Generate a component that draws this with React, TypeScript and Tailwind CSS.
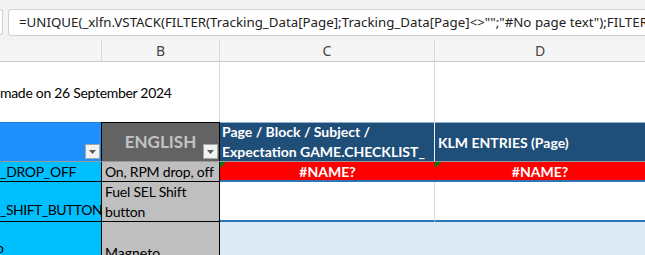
const cal = { fontFamily: "Lato, 'Liberation Sans', sans-serif" };
const seg = { fontFamily: "'Noto Sans', 'Open Sans', sans-serif" };

const FilterButton = () => (
  <div className="flex h-[15px] w-[15px] items-center justify-center border border-[#a6a6a6] bg-[#f2f2f2]">
    <svg width="7" height="4" viewBox="0 0 7 4">
      <path d="M0 0h7L3.5 4z" fill="#595959" />
    </svg>
  </div>
);

const ErrorMark = () => (
  <svg className="absolute left-0 top-0" width="6" height="6" viewBox="0 0 6 6">
    <path d="M0 0h6L0 6z" fill="#008000" />
  </svg>
);

export default function App() {
  return (
    <div className="h-[255px] w-[645px] overflow-hidden bg-white text-black" style={cal}>
      {/* formula bar */}
      <div className="flex h-[40px] items-start gap-[5px] bg-[#f3f3f3] pt-[9px]">
        <div className="h-[26px] w-[3px] rounded-r-[4px] border border-l-0 border-[#d0d0d0] bg-white"></div>
        <div
          className="flex h-[27px] flex-1 items-center overflow-hidden whitespace-nowrap rounded-l-[4px] border border-r-0 border-[#d0d0d0] bg-white pl-[10px] text-[13.3px] text-[#222]"
          style={seg}
        >
          =UNIQUE(_xlfn.VSTACK(FILTER(Tracking_Data[Page];Tracking_Data[Page]&lt;&gt;"";"#No page text");FILTER(
        </div>
      </div>

      {/* column letters */}
      <div className="flex h-[22px] border-b border-[#c8c8c8] bg-[#f5f5f5] text-[14px] text-[#444]" style={seg}>
        <div className="w-[102px] shrink-0 border-r border-[#dadada]"></div>
        <div className="flex w-[118px] shrink-0 items-center justify-center border-r border-[#dadada]">B</div>
        <div className="flex w-[215px] shrink-0 items-center justify-center border-r border-[#dadada]">C</div>
        <div className="flex flex-1 items-center justify-center">D</div>
      </div>

      {/* title row */}
      <div className="flex h-[60px] text-[14px] tracking-[-0.3px]">
        <div className="w-[220px] shrink-0 whitespace-nowrap border-r border-[#dadada] pt-[20px]">made on 26 September 2024</div>
        <div className="w-[215px] shrink-0 border-r border-[#dadada]"></div>
        <div className="flex-1"></div>
      </div>

      {/* table header */}
      <div className="flex h-[40px] border-b border-[#9a9a9a]">
        <div className="flex w-[101px] shrink-0 items-end justify-end border-t border-[#1b7fe0] bg-[#1f8ffb] pb-[2px] pr-[1px]">
          <FilterButton />
        </div>
        <div className="relative flex w-[119px] shrink-0 items-center justify-center border border-b-0 border-black bg-[#636363] text-[17px] font-bold text-[#c4c4c4]">
          ENGLISH
          <div className="absolute bottom-[2px] right-[1px]">
            <FilterButton />
          </div>
        </div>
        <div className="flex w-[215px] shrink-0 flex-col justify-center border-r border-t border-[#eef3f8] border-t-[#8eb4d9] bg-[#1f4e79] pl-[2px] text-[14px] font-bold leading-[20px] text-white">
          <div>Page / Block / Subject /</div>
          <div>Expectation GAME.CHECKLIST_</div>
        </div>
        <div className="flex flex-1 items-center border-t border-[#8eb4d9] bg-[#1f4e79] pl-[3px] text-[14px] font-bold text-white">
          KLM ENTRIES (Page)
        </div>
      </div>

      {/* error row */}
      <div className="flex h-[20px] text-[14px]">
        <div className="w-[101px] shrink-0 overflow-hidden whitespace-nowrap border-b border-black bg-[#00bfff] leading-[19px] tracking-[-0.3px]">_DROP_OFF</div>
        <div className="w-[119px] shrink-0 overflow-hidden whitespace-nowrap border-x border-b border-black bg-[#bfbfbf] pl-[3px] leading-[19px] tracking-[-0.2px]">On, RPM drop, off</div>
        <div className="relative flex w-[215px] shrink-0 items-center justify-center border-b-2 border-[#2e75b6] bg-[#ff0000] text-[14px] font-bold text-white">
          <ErrorMark />
          #NAME?
        </div>
        <div className="relative flex flex-1 items-center justify-center border-b-2 border-[#2e75b6] bg-[#ff0000] text-[14px] font-bold text-white">
          <ErrorMark />
          #NAME?
        </div>
      </div>

      {/* row 4 */}
      <div className="flex h-[40px] text-[14px]">
        <div className="flex w-[101px] shrink-0 items-end whitespace-nowrap border-b border-black bg-[#00bfff] pb-[1px] tracking-[-0.5px]">_SHIFT_BUTTON</div>
        <div className="w-[119px] shrink-0 border-x border-b border-black bg-[#bfbfbf] pl-[3px] leading-[20px] tracking-[-0.2px]">
          Fuel SEL Shift
          <br />
          button
        </div>
        <div className="w-[215px] shrink-0 border-b-2 border-r border-[#dadada] border-b-[#2e75b6] bg-white"></div>
        <div className="flex-1 border-b-2 border-[#2e75b6] bg-white"></div>
      </div>

      {/* row 5 */}
      <div className="flex h-[40px] text-[14px]">
        <div className="flex w-[101px] shrink-0 items-end overflow-hidden whitespace-nowrap bg-[#00bfff] pb-[4px]">
          <span className="-ml-[4px]">o</span>
        </div>
        <div className="flex w-[119px] shrink-0 items-end border-x border-black bg-[#bfbfbf] pl-[3px]">
          <span className="translate-y-[1px]">Magneto</span>
        </div>
        <div className="flex-1 bg-[#ddebf7]"></div>
      </div>
    </div>
  );
}
